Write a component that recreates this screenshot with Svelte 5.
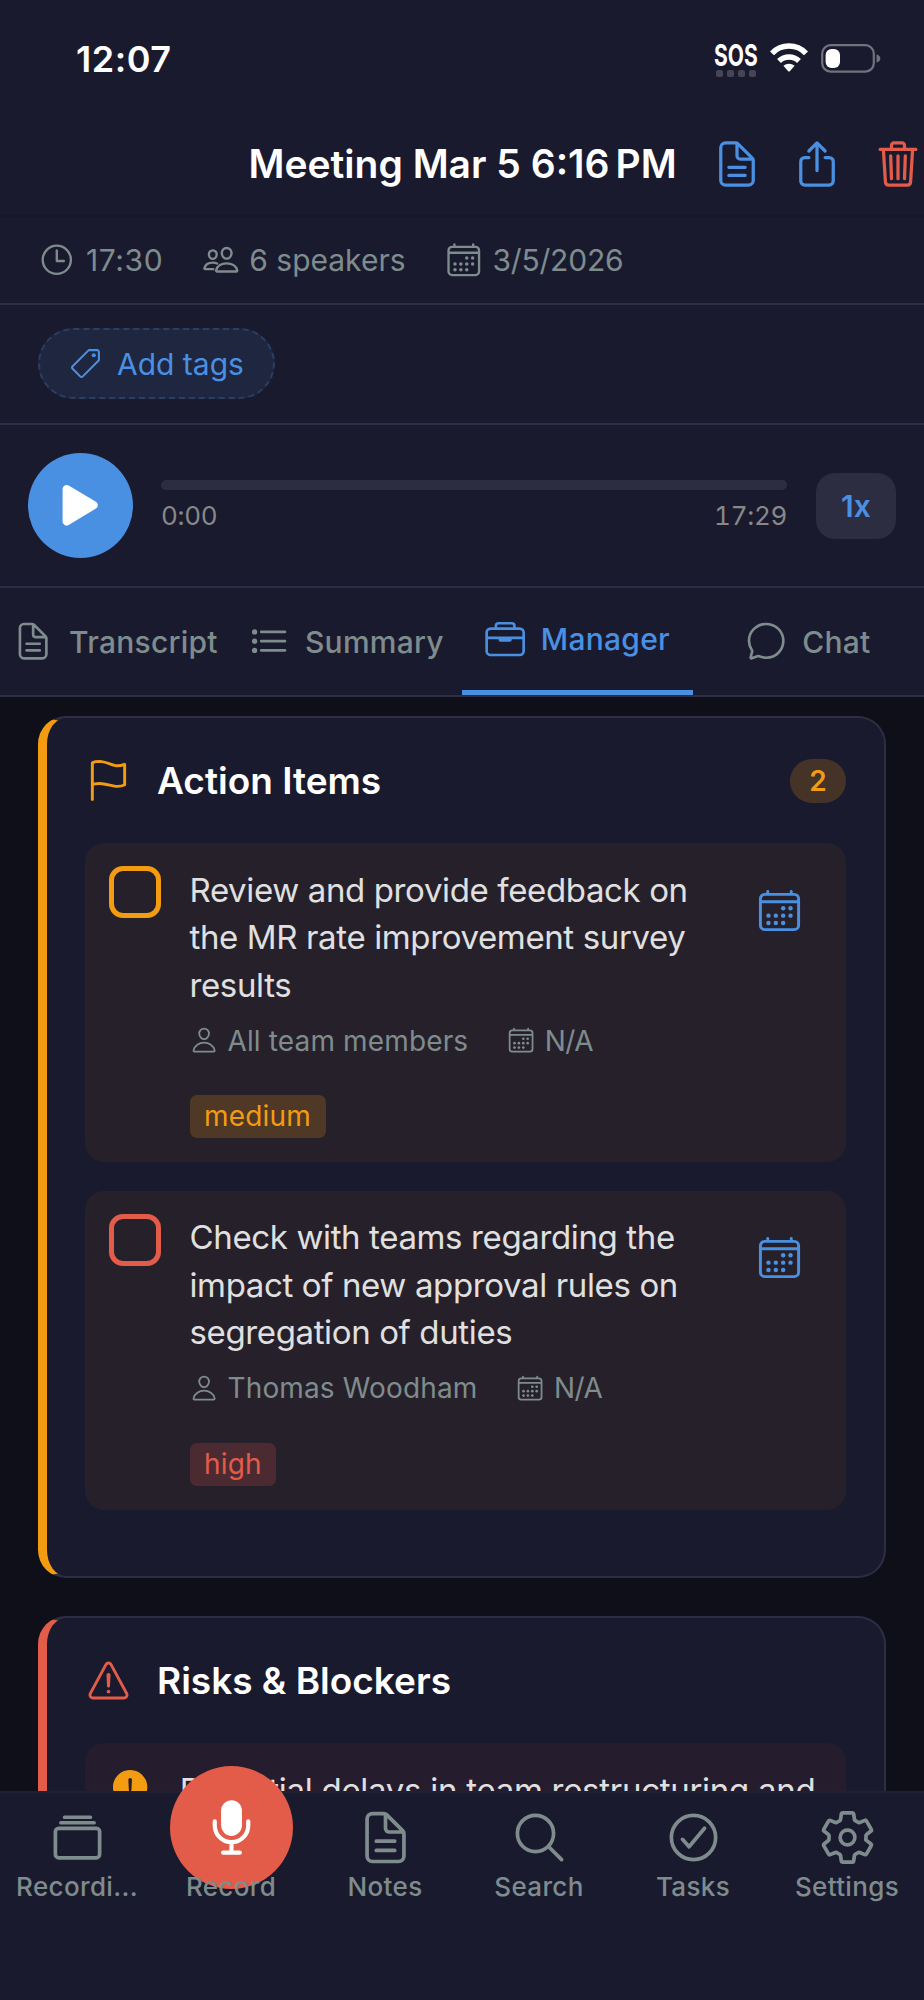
<script lang="ts">
  type Icon = { line?: string; fill?: string; dots?: number[][] };

  // outline icons on a 512 grid
  const icons: Record<string, Icon> = {
    document: {
      line: "M416 221.25V416a48 48 0 01-48 48H144a48 48 0 01-48-48V96a48 48 0 0148-48h98.75a32 32 0 0122.62 9.37l141.26 141.26a32 32 0 019.37 22.62zM256 56v120a32 32 0 0032 32h120M176 288h160M176 368h160",
    },
    share: {
      line: "M336 192h40a40 40 0 0140 40v192a40 40 0 01-40 40H136a40 40 0 01-40-40V232a40 40 0 0140-40h40M336 128l-80-80-80 80M256 321V48",
    },
    trash: {
      line: "M112 112l20 320c.95 18.49 14.4 32 32 32h184c17.67 0 30.87-13.51 32-32l20-320M80 112h352M192 112V72a23.93 23.93 0 0124-24h80a23.93 23.93 0 0124 24v40M256 176v224M184 176l8 224M328 176l-8 224",
    },
    time: {
      line: "M256 64C150 64 64 150 64 256s86 192 192 192 192-86 192-192S362 64 256 64zM256 128v144h96",
    },
    people: {
      line: "M402 168c-2.93 40.67-33.1 72-66 72s-63.12-31.32-66-72c-3-42.31 26.37-72 66-72s69 30.46 66 72zM336 304c-65.17 0-127.84 32.37-143.54 95.41-2.08 8.34 3.15 16.59 11.72 16.59h263.65c8.57 0 13.77-8.25 11.72-16.59C463.85 335.36 401.18 304 336 304zM200 185.94c-2.34 32.48-26.72 58.06-53 58.06s-50.7-25.57-53-58.06C91.61 152.15 115.34 128 147 128s55.39 24.77 53 57.94zM206 306c-18.05-8.27-37.93-11.45-59-11.45-52 0-102.1 25.85-114.65 76.2-1.65 6.66 2.53 13.25 9.37 13.25H154",
    },
    calendar: {
      line: "M96 80h320a48 48 0 0148 48v288a48 48 0 01-48 48H96a48 48 0 01-48-48V128a48 48 0 0148-48zM128 48v32M384 48v32M464 160H48",
      dots: [
        [296, 232, 24], [376, 232, 24],
        [136, 312, 24], [216, 312, 24], [296, 312, 24], [376, 312, 24],
        [136, 392, 24], [216, 392, 24], [296, 392, 24],
      ],
    },
    tag: {
      line: "M435.25 48h-122.9a14.46 14.46 0 00-10.2 4.2L56.45 297.9a28.85 28.85 0 000 40.7l117 117a28.85 28.85 0 0040.7 0L459.75 210a14.46 14.46 0 004.2-10.2v-123a28.66 28.66 0 00-28.7-28.8z",
      dots: [[384, 128, 32]],
    },
    play: {
      fill: "M133 440a35.37 35.37 0 01-17.5-4.67c-12-6.8-19.46-20-19.46-34.33V111c0-14.37 7.46-27.53 19.46-34.33a35.13 35.13 0 0135.77.45l247.85 148.36a36 36 0 010 61l-247.89 148.4A35.5 35.5 0 01133 440z",
    },
    list: {
      line: "M160 144h288M160 256h288M160 368h288",
      dots: [[80, 144, 32], [80, 256, 32], [80, 368, 32]],
    },
    briefcase: {
      line: "M80 128h352a48 48 0 0148 48v224a48 48 0 01-48 48H80a48 48 0 01-48-48V176a48 48 0 0148-48zM144 128V96a32 32 0 0132-32h160a32 32 0 0132 32v32M480 240H32M320 240v24a8 8 0 01-8 8H200a8 8 0 01-8-8v-24",
      fill: "M192 240h128v32H192z",
    },
    chat: {
      line: "M87.49 380c1.19-4.38-1.44-10.47-3.95-14.86a44.86 44.86 0 00-2.54-3.8 199.81 199.81 0 01-33-110C47.65 139.09 140.73 48 255.83 48 356.21 48 440 117.54 459.58 209.85a199 199 0 014.42 41.64c0 112.41-89.49 204.93-204.59 204.93-18.3 0-43-4.6-56.47-8.37s-26.92-8.77-30.39-10.11a31.09 31.09 0 00-11.12-2.07 30.71 30.71 0 00-12.09 2.43l-67.83 24.48a16 16 0 01-4.67 1.22 9.6 9.6 0 01-9.57-9.74 15.85 15.85 0 01.6-3.29z",
    },
    flag: {
      line: "M80 464V68.14a8 8 0 014-6.9C91.81 56.66 112.92 48 160 48c64 0 145 48 192 48a199.53 199.53 0 0077.23-15.77 2 2 0 012.77 1.85v219.36a4 4 0 01-2.39 3.65C421.37 308.7 392.33 320 352 320c-48 0-128-32-192-32s-80 16-80 16",
    },
    person: {
      line: "M344 144c-3.92 52.87-44 96-88 96s-84.15-43.12-88-96c-4-55 35-96 88-96s92 42 88 96zM256 304c-87 0-175.3 48-191.64 138.6C62.39 453.52 68.57 464 80 464h352c11.44 0 17.62-10.48 15.65-21.4C431.3 352 343 304 256 304z",
    },
    warning: {
      line: "M85.57 446.25h340.86a32 32 0 0028.17-47.17L284.18 82.58c-12.09-22.44-44.27-22.44-56.36 0L57.4 399.08a32 32 0 0028.17 47.17zM250.26 195.39l5.74 122 5.73-121.95a5.74 5.74 0 00-5.79-6a5.74 5.74 0 00-5.68 5.95z",
      dots: [[256, 377, 20]],
    },
    alert: {
      fill: "M256 48C141.31 48 48 141.31 48 256s93.31 208 208 208 208-93.31 208-208S370.69 48 256 48zm0 319.91a20 20 0 1120-20 20 20 0 01-20 20zm21.72-201.15l-5.74 122a16 16 0 01-32 0l-5.74-121.94a21.74 21.74 0 1143.44 0z",
    },
    albums: {
      line: "M92.87 176h326.26A28.87 28.87 0 01448 204.87v198.26A28.87 28.87 0 01419.13 432H92.87A28.87 28.87 0 0164 403.13V204.87A28.87 28.87 0 0192.87 176zM144 80h224M112 128h288",
    },
    mic: {
      line: "M192 448h128M384 208v32c0 70.4-57.6 128-128 128s-128-57.6-128-128v-32M256 368v80",
      fill: "M256 320a78.83 78.83 0 01-56.55-24.1A80.89 80.89 0 01176 239V128a79.69 79.69 0 0180-80c44.86 0 80 35.14 80 80v111c0 44.66-35.89 81-80 81z",
    },
    search: {
      line: "M221.09 64a157.09 157.09 0 10157.09 157.09A157.1 157.1 0 00221.09 64zM338.29 338.29L448 448",
    },
    check: {
      line: "M448 256c0-106-86-192-192-192S64 150 64 256s86 192 192 192 192-86 192-192zM352 176L217.6 336 160 272",
    },
    settings: {
      line: "M262.29 192.31a64 64 0 1057.4 57.4 64.13 64.13 0 00-57.4-57.4zM416.39 256a154.34 154.34 0 01-1.53 20.79l45.21 35.46a10.81 10.81 0 012.45 13.75l-42.77 74a10.81 10.81 0 01-13.14 4.59l-44.9-18.08a16.11 16.11 0 00-15.17 1.75A164.48 164.48 0 01325 400.8a15.94 15.94 0 00-8.82 12.14l-6.73 47.89a11.08 11.08 0 01-10.68 9.17h-85.54a11.11 11.11 0 01-10.69-8.87l-6.72-47.82a16.07 16.07 0 00-9-12.22 155.3 155.3 0 01-21.46-12.57 16 16 0 00-15.11-1.71l-44.89 18.07a10.81 10.81 0 01-13.14-4.58l-42.77-74a10.8 10.8 0 012.45-13.75l38.21-30a16.05 16.05 0 006-14.08c-.36-4.17-.58-8.33-.58-12.5s.21-8.27.58-12.35a16 16 0 00-6.07-13.94l-38.19-30A10.81 10.81 0 0149.48 186l42.77-74a10.81 10.81 0 0113.14-4.59l44.9 18.08a16.11 16.11 0 0015.17-1.75A164.48 164.48 0 01187 111.2a15.94 15.94 0 008.82-12.14l6.73-47.89A11.08 11.08 0 01213.23 42h85.54a11.11 11.11 0 0110.69 8.87l6.72 47.82a16.07 16.07 0 009 12.22 155.3 155.3 0 0121.46 12.57 16 16 0 0015.11 1.71l44.89-18.07a10.81 10.81 0 0113.14 4.58l42.77 74a10.8 10.8 0 01-2.45 13.75l-38.21 30a16.05 16.05 0 00-6.05 14.08c.33 4.14.55 8.3.55 12.47z",
    },
  };

  const tabs = [
    { label: "Transcript", icon: "document" },
    { label: "Summary", icon: "list" },
    { label: "Manager", icon: "briefcase" },
    { label: "Chat", icon: "chat" },
  ];
  let activeTab = "Manager";

  const actionItems = [
    {
      text: "Review and provide feedback on the MR rate improvement survey results",
      owner: "All team members",
      due: "N/A",
      priority: "medium",
    },
    {
      text: "Check with teams regarding the impact of new approval rules on segregation of duties",
      owner: "Thomas Woodham",
      due: "N/A",
      priority: "high",
    },
  ];

  const navItems = [
    { label: "Recordi...", icon: "albums" },
    { label: "Record", icon: "mic" },
    { label: "Notes", icon: "document" },
    { label: "Search", icon: "search" },
    { label: "Tasks", icon: "check" },
    { label: "Settings", icon: "settings" },
  ];
</script>

{#snippet icon(name: string, size: number)}
  <svg class="icon" width={size} height={size} viewBox="0 0 512 512">
    {#if icons[name].line}
      <path class="line" d={icons[name].line} />
    {/if}
    {#if icons[name].fill}
      <path d={icons[name].fill} />
    {/if}
    {#each icons[name].dots ?? [] as [cx, cy, r]}
      <circle {cx} {cy} {r} />
    {/each}
  </svg>
{/snippet}

<div class="screen">
  <div class="status">
    <span class="clock">12:07</span>
    <div class="signals">
      <div class="carrier">
        <span class="sos">SOS</span>
        <div class="bars"><i></i><i></i><i></i><i></i></div>
      </div>
      <svg class="wifi" width="38" height="29" viewBox="0 0 38 29">
        <path class="arc" d="M2 10.4A23.5 23.5 0 0 1 36 10.4" />
        <path class="arc" d="M9 18A14.4 14.4 0 0 1 29 18" />
        <path d="M13.4 22.8a8.7 8.7 0 0 1 11.2 0l-4.6 5.300a1.4 1.4 0 0 1-2 0z" />
      </svg>
      <svg class="battery" width="60" height="29" viewBox="0 0 60 29">
        <rect class="shell" x="1.2" y="1.2" width="51.6" height="26.4" rx="8.4" />
        <rect class="level" x="4.6" y="5" width="14.4" height="19" rx="6" />
        <path class="nub" d="M55.5 10.4c2.4.6 3.8 2 3.8 4s-1.4 3.4-3.8 4z" />
      </svg>
    </div>
  </div>

  <header>
    <h1>Meeting Mar 5 6:16<span class="thin"></span>PM</h1>
    <button>{@render icon("document", 52)}</button>
    <button>{@render icon("share", 52)}</button>
    <button class="danger">{@render icon("trash", 52)}</button>
  </header>

  <div class="meta">
    <span class="duration">{@render icon("time", 37.6)}17:30</span>
    <span class="speakers">{@render icon("people", 37.6)}6 speakers</span>
    <span class="date">{@render icon("calendar", 37.6)}3/5/2026</span>
  </div>

  <div class="tags">
    <button class="add-tags">{@render icon("tag", 33)}<span>Add tags</span></button>
  </div>

  <div class="player">
    <button class="play">{@render icon("play", 56.4)}</button>
    <div class="progress">
      <div class="track"></div>
      <div class="times">
        <span>0:00</span>
        <span>17:29</span>
      </div>
    </div>
    <button class="speed">1x</button>
  </div>

  <nav class="tabs">
    {#each tabs as tab}
      <button class="tab" class:active={tab.label === activeTab} on:click={() => (activeTab = tab.label)}>
        {@render icon(tab.icon, 42.3)}
        <span>{tab.label}</span>
      </button>
    {/each}
  </nav>

  <main>
    <section class="card actions">
      <div class="card-head">
        {@render icon("flag", 47)}
        <h2>Action Items</h2>
        <span class="count">{actionItems.length}</span>
      </div>
      {#each actionItems as item}
        <div class="item {item.priority}">
          <div class="checkbox"></div>
          <div class="body">
            <p>{item.text}</p>
            <div class="details">
              <span>{@render icon("person", 28.2)}{item.owner}</span>
              <span class="due">{@render icon("calendar", 28.2)}{item.due}</span>
            </div>
            <span class="priority">{item.priority}</span>
          </div>
          <button class="schedule">{@render icon("calendar", 47)}</button>
        </div>
      {/each}
    </section>

    <section class="card risks">
      <div class="card-head">
        {@render icon("warning", 47)}
        <h2>Risks &amp; Blockers</h2>
      </div>
      <div class="item risk">
        {@render icon("alert", 42.3)}
        <p>Potential delays in team restructuring and</p>
      </div>
    </section>
  </main>

  <nav class="bottom">
    {#each navItems as item}
      <button>
        {#if item.icon === "mic"}
          <div class="slot">
            <div class="record-circle">{@render icon("mic", 67)}</div>
          </div>
        {:else}
          <div class="slot">{@render icon(item.icon, 59)}</div>
        {/if}
        <span>{item.label}</span>
      </button>
    {/each}
  </nav>
</div>

<style>
  :global(body) {
    margin: 0;
    background: #0f0f1a;
  }
  .screen {
    display: flex;
    flex-direction: column;
    width: 924px;
    height: 2000px;
    overflow: hidden;
    box-sizing: border-box;
    background: #1a1a2e;
    color: #fff;
    font-family: Inter, "Liberation Sans", sans-serif;
    font-size: 30px;
    white-space: nowrap;
  }
  .screen * {
    box-sizing: border-box;
  }
  button {
    display: flex;
    align-items: center;
    justify-content: center;
    padding: 0;
    border: none;
    background: none;
    color: inherit;
    font: inherit;
    letter-spacing: inherit;
  }
  h1,
  h2,
  p {
    margin: 0;
  }
  .icon {
    display: block;
    flex: none;
    fill: currentColor;
  }
  .line {
    fill: none;
    stroke: currentColor;
    stroke-width: 32;
    stroke-linecap: round;
    stroke-linejoin: round;
  }

  .status {
    display: flex;
    justify-content: space-between;
    flex: none;
    height: 112px;
    padding: 43px 43px 0 76px;
  }
  .clock {
    height: 32px;
    line-height: 32px;
    font-size: 36px;
    font-weight: 600;
    letter-spacing: 0.5px;
  }
  .signals {
    display: flex;
    align-items: flex-start;
  }
  .carrier {
    width: 43px;
    margin-right: 12px;
  }
  .sos {
    display: block;
    width: 43px;
    height: 24px;
    margin-left: -1px;
    line-height: 24px;
    font-size: 30px;
    font-weight: 700;
    transform: scaleX(0.7);
    transform-origin: left;
  }
  .bars {
    display: flex;
    gap: 4px;
    margin: 3px 0 0 1px;
  }
  .bars i {
    width: 7px;
    height: 7px;
    border-radius: 2px;
    background: #454556;
  }
  .wifi {
    margin-right: 13px;
    fill: #fff;
  }
  .arc {
    fill: none;
    stroke: #fff;
    stroke-width: 5.5;
  }
  .battery {
    margin-top: 1px;
  }
  .shell {
    fill: none;
    stroke: #72727f;
    stroke-width: 2.2;
  }
  .level {
    fill: #fff;
  }
  .nub {
    fill: #72727f;
  }

  header {
    display: flex;
    align-items: center;
    flex: none;
    height: 105px;
    padding-left: 248.5px;
    border-bottom: 2px solid #171729;
    color: #4a90e2;
  }
  h1 {
    width: 462px;
    color: #fff;
    font-size: 39px;
    font-weight: 600;
  }
  .thin {
    display: inline-block;
    width: 6px;
  }
  header button + button {
    margin-left: 28.5px;
  }
  .danger {
    color: #e25c49;
  }

  .meta {
    display: flex;
    flex: none;
    align-items: center;
    gap: 39px;
    height: 88px;
    padding: 0 38px 1px;
    border-bottom: 2px solid #2d2d44;
    color: #7f8c8d;
  }
  .meta span {
    display: flex;
    align-items: center;
    gap: 9.4px;
  }
  .meta .duration {
    gap: 10.4px;
    letter-spacing: 0.6px;
  }
  .meta .date {
    gap: 10.4px;
    letter-spacing: -0.2px;
  }

  .tags {
    flex: none;
    height: 120px;
    padding: 23px 38px;
    border-bottom: 2px solid #2d2d44;
  }
  .add-tags {
    justify-content: flex-start;
    gap: 15px;
    width: 237px;
    height: 71px;
    padding-left: 29px;
    border: 2px dashed #2b3f63;
    border-radius: 36px;
    background: #1f2640;
    color: #4a90e2;
  }

  .player {
    display: flex;
    flex: none;
    align-items: center;
    height: 163px;
    padding: 0 28px;
    border-bottom: 2px solid #2d2d44;
  }
  .play {
    width: 105px;
    height: 105px;
    border-radius: 50%;
    background: #4a90e2;
    color: #fff;
  }
  .progress {
    width: 626px;
    margin: 0 29px 0 28px;
  }
  .track {
    height: 10px;
    border-radius: 5px;
    background: #2d2d42;
  }
  .times {
    display: flex;
    justify-content: space-between;
    margin-top: 9px;
    padding-top: 1px;
    color: #888;
    font-size: 26px;
    font-variant-numeric: tabular-nums;
    letter-spacing: -0.3px;
    line-height: 31px;
  }
  .speed {
    width: 80px;
    height: 66px;
    border-radius: 19px;
    background: #2d2d42;
    color: #4a90e2;
    font-weight: 600;
  }

  .tabs {
    display: flex;
    flex: none;
    height: 109px;
    border-bottom: 2px solid #2d2d44;
  }
  .tab {
    flex: 1;
    gap: 14.5px;
    padding-right: 1px;
    color: #7f8c8d;
    font-weight: 500;
    letter-spacing: 0.25px;
  }
  .active {
    border-bottom: 5px solid #4a90e2;
    color: #4a90e2;
  }

  main {
    flex: 1;
    min-height: 0;
    overflow: hidden;
    padding: 19px 38px 0;
    background: #0f0f1a;
  }
  .card {
    height: 862px;
    margin-bottom: 38px;
    padding: 37px 38px;
    border: 2px solid #2d2d44;
    border-left-width: 9.4px;
    border-radius: 28px;
    background: #1a1a2e;
  }
  .actions {
    border-left-color: #f39c12;
  }
  .risks {
    border-left-color: #e25c49;
  }
  .card-head {
    display: flex;
    align-items: center;
    height: 51px;
    margin-bottom: 37px;
  }
  .actions .card-head {
    color: #f39c12;
  }
  .risks .card-head {
    color: #e25c49;
  }
  h2 {
    flex: 1;
    margin-left: 25px;
    color: #fff;
    font-size: 37px;
    font-weight: 600;
    line-height: 44px;
  }
  .count {
    width: 56px;
    border-radius: 22px;
    background: rgba(243, 156, 18, 0.2);
    font-size: 28px;
    font-weight: 600;
    line-height: 44px;
    text-align: center;
  }

  .item {
    display: flex;
    align-items: flex-start;
    height: 319px;
    margin-bottom: 28.5px;
    padding: 23px 24px 23px 23.5px;
    border-radius: 19px;
    background: #26202b;
  }
  .checkbox {
    flex: none;
    width: 52px;
    height: 52px;
    border: 5px solid;
    border-radius: 14px;
  }
  .medium .checkbox,
  .medium .priority {
    color: #f39c12;
  }
  .high .checkbox,
  .high .priority {
    color: #e25c49;
  }
  .body {
    flex: 1;
    margin: 0 19px 0 29px;
  }
  p {
    padding-top: 0.8px;
    color: #e0e0e0;
    font-size: 33px;
    letter-spacing: -0.37px;
    line-height: 47.4px;
    white-space: normal;
  }
  .details {
    display: flex;
    gap: 38.5px;
    margin-top: 13.5px;
    color: #7f8c8d;
    font-size: 28px;
    letter-spacing: 0.14px;
    line-height: 36px;
  }
  .details span {
    display: flex;
    align-items: center;
    gap: 9.8px;
  }
  .details .due {
    letter-spacing: -0.5px;
  }
  .priority {
    display: inline-block;
    margin-top: 36.5px;
    padding: 0 14.5px;
    border-radius: 7px;
    font-size: 28px;
    letter-spacing: 0.2px;
    line-height: 43px;
  }
  .medium .priority {
    background: rgba(243, 156, 18, 0.2);
  }
  .high .priority {
    background: rgba(226, 92, 73, 0.2);
  }
  .schedule {
    width: 85px;
    height: 88px;
    color: #4a90e2;
  }
  .risk {
    gap: 29px;
    background: #251c2d;
    color: #f39c12;
  }
  .risk p {
    letter-spacing: -0.28px;
    white-space: nowrap;
  }

  .bottom {
    display: flex;
    flex: none;
    height: 209px;
    padding-top: 15px;
    border-top: 2px solid #202034;
    color: #7f8c8d;
  }
  .bottom button {
    flex: 1;
    flex-direction: column;
    justify-content: flex-start;
    font-size: 26px;
    font-weight: 500;
    letter-spacing: 0.35px;
  }
  .slot {
    display: flex;
    align-items: center;
    justify-content: center;
    height: 59px;
  }
  .bottom span {
    position: relative;
    line-height: 40px;
  }
  .record-circle {
    display: flex;
    flex: none;
    align-items: center;
    justify-content: center;
    width: 123px;
    height: 123px;
    margin-top: -20px;
    border-radius: 50%;
    background: #e25c49;
    color: #fff;
  }
</style>
